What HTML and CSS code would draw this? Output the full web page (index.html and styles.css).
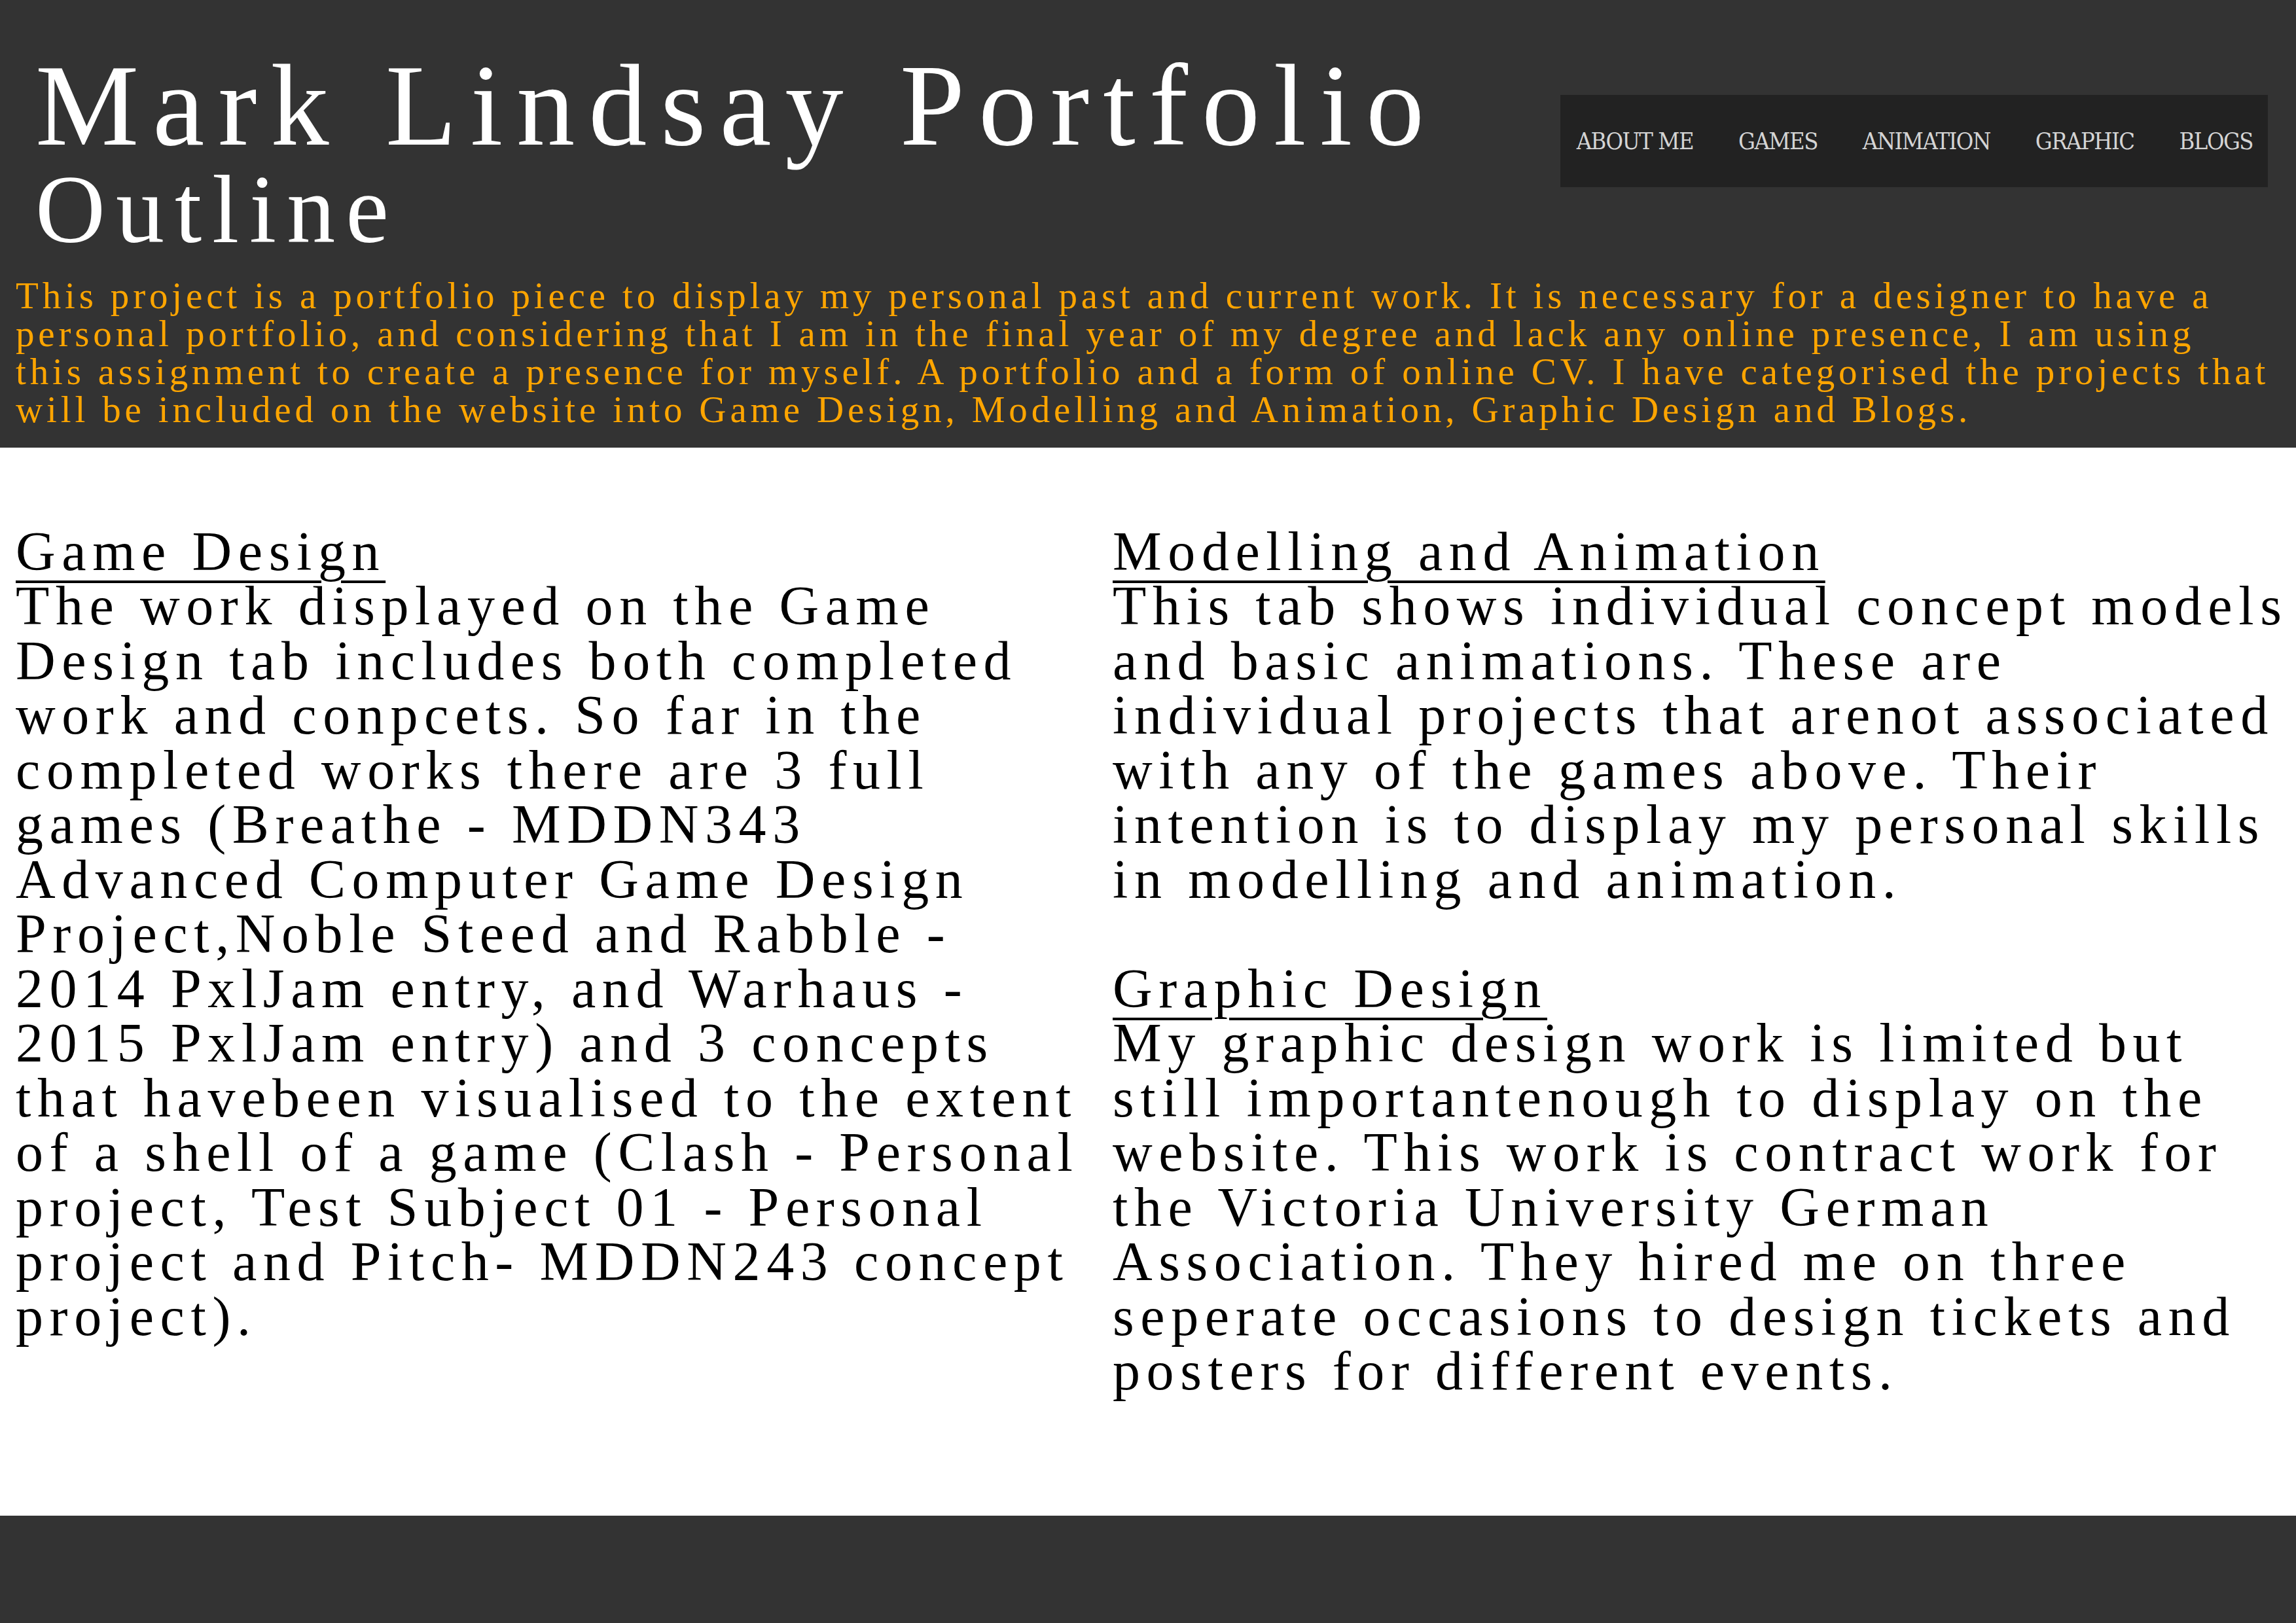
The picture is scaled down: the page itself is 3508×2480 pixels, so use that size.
FILE: index.html
```html
<!DOCTYPE html>
<html lang="en">
<head>
<meta charset="utf-8">
<title>Mark Lindsay Portfolio Outline</title>
<link rel="stylesheet" href="styles.css">
</head>
<body>
<header class="site-header">
  <div class="header-top">
    <div class="titles">
      <h1 class="site-title">Mark Lindsay Portfolio</h1>
      <h2 class="page-title">Outline</h2>
    </div>
    <nav class="main-nav">
      <a class="nav-link" href="#">ABOUT ME</a>
      <a class="nav-link" href="#">GAMES</a>
      <a class="nav-link" href="#">ANIMATION</a>
      <a class="nav-link" href="#">GRAPHIC</a>
      <a class="nav-link" href="#">BLOGS</a>
    </nav>
  </div>
  <p class="intro">This project is a portfolio piece to display my personal past and current work. It is necessary for a designer to have a personal portfolio, and considering that I am in the final year of my degree and lack any online presence, I am using this assignment to create a presence for myself. A portfolio and a form of online CV. I have categorised the projects that will be included on the website into Game Design, Modelling and Animation, Graphic Design and Blogs.</p>
</header>
<main class="content">
  <div class="column">
    <section class="block">
      <h3 class="block-title">Game Design</h3>
      <p class="block-text">The work displayed on the Game Design tab includes both completed work and conpcets. So far in the completed works there are 3 full games (Breathe - MDDN343 Advanced Computer Game Design Project,Noble Steed and Rabble - 2014 PxlJam entry, and Warhaus - 2015 PxlJam entry) and 3 concepts that havebeen visualised to the extent of a shell of a game (Clash - Personal project, Test Subject 01 - Personal project and Pitch- MDDN243 concept project).</p>
    </section>
  </div>
  <div class="column">
    <section class="block">
      <h3 class="block-title">Modelling and Animation</h3>
      <p class="block-text">This tab shows individual concept models and basic animations. These are individual projects that arenot associated with any of the games above. Their intention is to display my personal skills in modelling and animation.</p>
    </section>
    <section class="block">
      <h3 class="block-title">Graphic Design</h3>
      <p class="block-text">My graphic design work is limited but still importantenough to display on the website. This work is contract work for the Victoria University German Association. They hired me on three seperate occasions to design tickets and posters for different events.</p>
    </section>
  </div>
</main>
<footer class="site-footer"></footer>
</body>
</html>
```

FILE: styles.css
```css
* {
  box-sizing: border-box;
}

html, body {
  margin: 0;
  padding: 0;
}

body {
  min-height: 100vh;
  display: flex;
  flex-direction: column;
  background: #ffffff;
  font-family: "Liberation Serif", "Times New Roman", serif;
  color: #000000;
}

.site-header {
  background: #333333;
  padding: 0 38px 28px 24px;
}

.header-top {
  display: flex;
  justify-content: space-between;
  align-items: flex-start;
}

.titles {
  padding-left: 30px;
}

.site-title {
  margin: 72px 0 0 0;
  font-size: 178px;
  line-height: 178px;
  font-weight: normal;
  letter-spacing: 21px;
  color: #ffffff;
  white-space: nowrap;
}

.page-title {
  margin: 0;
  font-size: 148px;
  line-height: 140px;
  font-weight: normal;
  letter-spacing: 16px;
  color: #ffffff;
}

.main-nav {
  margin-top: 145px;
  margin-right: 5px;
  height: 141px;
  background: #222222;
  display: flex;
  align-items: center;
  gap: 69px;
  padding: 0 23px 0 25px;
}

.nav-link {
  font-family: "DejaVu Serif Condensed", "DejaVu Serif", serif;
  font-stretch: condensed;
  font-size: 36px;
  letter-spacing: -1.5px;
  color: #d4d4d4;
  text-decoration: none;
  white-space: nowrap;
}

.intro {
  margin: 32.6px 0 0 0;
  font-size: 57px;
  line-height: 58.3px;
  letter-spacing: 5.85px;
  color: #ffa500;
}

.content {
  flex: 1;
  display: grid;
  grid-template-columns: 1644px 1fr;
  column-gap: 32px;
  align-items: start;
  padding: 117px 0 0 24px;
}

.block + .block {
  margin-top: 83.5px;
}

.block-title,
.block-text {
  margin: 0;
  font-size: 84px;
  line-height: 83.5px;
  letter-spacing: 9.6px;
  font-weight: normal;
  color: #000000;
}

.block-title {
  display: inline;
  text-decoration: underline;
  text-decoration-thickness: 4px;
  text-underline-offset: 16px;
}

.block-title::after {
  content: "";
  display: block;
}

.site-footer {
  height: 164px;
  background: #333333;
}
```
